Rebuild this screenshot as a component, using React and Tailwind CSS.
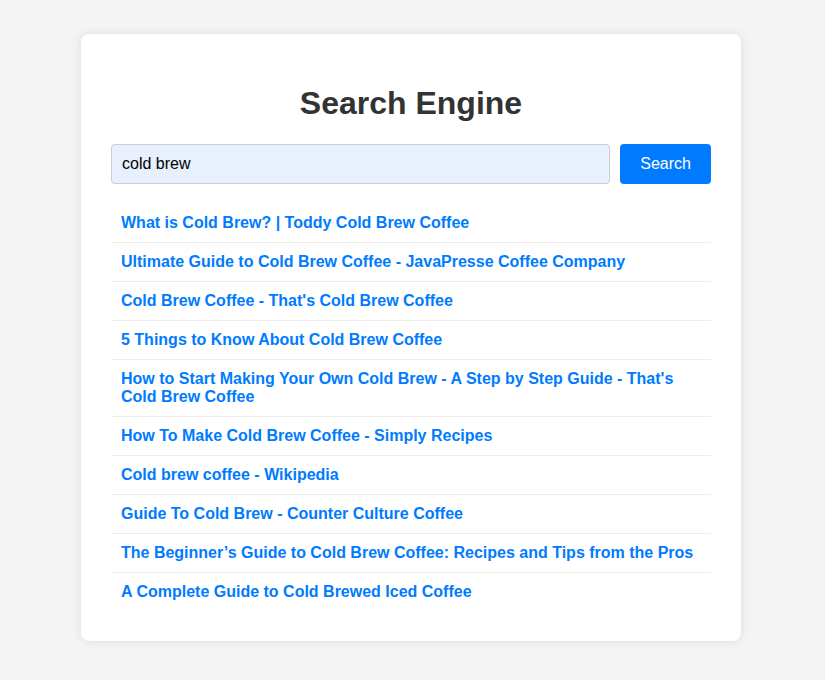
const results = [
  'What is Cold Brew? | Toddy Cold Brew Coffee',
  'Ultimate Guide to Cold Brew Coffee - JavaPresse Coffee Company',
  "Cold Brew Coffee - That's Cold Brew Coffee",
  '5 Things to Know About Cold Brew Coffee',
  "How to Start Making Your Own Cold Brew - A Step by Step Guide - That's Cold Brew Coffee",
  'How To Make Cold Brew Coffee - Simply Recipes',
  'Cold brew coffee - Wikipedia',
  'Guide To Cold Brew - Counter Culture Coffee',
  'The Beginner\u2019s Guide to Cold Brew Coffee: Recipes and Tips from the Pros',
  'A Complete Guide to Cold Brewed Iced Coffee',
];

export default function App() {
  return (
    <div className="min-h-[680px] bg-[#f4f4f4] pt-[34px] pr-[3px] pb-10 font-['Liberation_Sans',Arial,sans-serif]">
      <div className="mx-auto w-[660px] rounded-lg bg-white p-[30px] shadow-[0_0_10px_rgba(0,0,0,0.1)]">
        <h1 className="mt-[21px] mb-[22px] text-center text-[32px] leading-[37px] font-bold text-[#333]">
          Search Engine
        </h1>
        <div className="flex gap-[10px]">
          <input
            defaultValue="cold brew"
            className="h-10 flex-1 rounded border border-[#ccc] bg-[#e8f0fe] px-[10px] text-base text-black outline-none"
          />
          <button className="h-10 rounded bg-[#007bff] px-5 text-base text-white">Search</button>
        </div>
        <ul className="mt-5">
          {results.map((r, i) => (
            <li
              key={i}
              className={`p-[10px] text-base leading-[18px] ${i < results.length - 1 ? 'border-b border-[#eee]' : ''}`}
            >
              <a href="#" className="font-bold text-[#007bff]">
                {r}
              </a>
            </li>
          ))}
        </ul>
      </div>
    </div>
  );
}
